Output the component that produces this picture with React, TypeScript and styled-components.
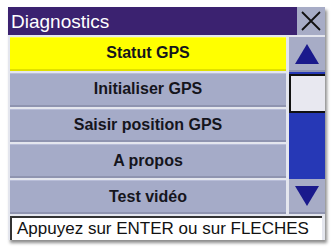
import React from "react";
import styled, { createGlobalStyle } from "styled-components";

const Global = createGlobalStyle`
  html, body { margin: 0; padding: 0; background: #ffffff; }
  body { font-family: "Liberation Sans", Arial, sans-serif; }
`;

const Page = styled.div`
  width: 335px;
  height: 249px;
  padding: 7px 0 0 8px;
  box-sizing: border-box;
`;

const Window = styled.div`
  width: 317px;
  height: 233px;
  display: flex;
  flex-direction: column;
  background: #e4e6ee;
  box-shadow: 2px 3px 3px rgba(0, 0, 0, 0.45);
`;

const TitleRow = styled.div`
  display: flex;
  height: 28px;
`;

const Title = styled.div`
  flex: 1;
  background: #3b2270;
  color: #ffffff;
  font-size: 19px;
  line-height: 29px;
  padding-left: 3px;
`;

const Close = styled.div`
  width: 28px;
  background: #a7acc6;
  display: flex;
  align-items: center;
  justify-content: center;
`;

const Body = styled.div`
  display: flex;
  flex: 1;
  padding: 2px 0 2px 2px;
  gap: 3px;
`;

const List = styled.div`
  flex: 1;
  display: flex;
  flex-direction: column;
  gap: 2px;
`;

const Item = styled.div<{ $active?: boolean }>`
  flex: 1;
  display: flex;
  align-items: center;
  justify-content: center;
  font-size: 16px;
  font-weight: bold;
  color: #15151c;
  background: ${(p) => (p.$active ? "#ffff00" : "#a5abc8")};
  border-top: 1px solid ${(p) => (p.$active ? "#ffff40" : "#b8bdd8")};
  border-bottom: 2px solid ${(p) => (p.$active ? "#e0e000" : "#8f94b0")};
  box-sizing: border-box;
`;

const Scroll = styled.div`
  width: 36px;
  display: flex;
  flex-direction: column;
`;

const ArrowBtn = styled.div`
  height: 35px;
  background: #a7acc6;
  display: flex;
  align-items: center;
  justify-content: center;
  border-bottom: 2px solid #8f94b0;
  box-sizing: border-box;
`;

const Track = styled.div`
  flex: 1;
  background: #2638b6;
  display: flex;
  flex-direction: column;
  padding-top: 2px;
`;

const Thumb = styled.div`
  height: 39px;
  background: #e8e8f0;
  border: 2px solid #111111;
  border-right: none;
  box-sizing: border-box;
`;

const Status = styled.div`
  height: 24px;
  margin: 0 3px 0 2px;
  background: #ffffff;
  border-top: 2px solid #333333;
  border-left: 2px solid #333333;
  box-sizing: border-box;
  font-size: 17px;
  line-height: 21px;
  padding-left: 5px;
  color: #111111;
  white-space: nowrap;
`;

const Up = () => (
  <svg width="26" height="22" viewBox="0 0 26 22">
    <polygon points="13,1 25,21 1,21" fill="#1a1a8c" />
  </svg>
);

const Down = () => (
  <svg width="26" height="22" viewBox="0 0 26 22">
    <polygon points="1,1 25,1 13,21" fill="#1a1a8c" />
  </svg>
);

const X = () => (
  <svg width="22" height="22" viewBox="0 0 22 22">
    <path d="M2 2 L20 20 M20 2 L2 20" stroke="#111" strokeWidth="1.8" />
  </svg>
);

const items = ["Statut GPS", "Initialiser GPS", "Saisir position GPS", "A propos", "Test vidéo"];

export default function App() {
  return (
    <>
      <Global />
      <Page>
        <Window>
          <TitleRow>
            <Title>Diagnostics</Title>
            <Close>
              <X />
            </Close>
          </TitleRow>
          <Body>
            <List>
              {items.map((t, i) => (
                <Item key={t} $active={i === 0}>
                  {t}
                </Item>
              ))}
            </List>
            <Scroll>
              <ArrowBtn>
                <Up />
              </ArrowBtn>
              <Track>
                <Thumb />
              </Track>
              <ArrowBtn>
                <Down />
              </ArrowBtn>
            </Scroll>
          </Body>
          <Status>Appuyez sur ENTER ou sur FLECHES</Status>
        </Window>
      </Page>
    </>
  );
}
